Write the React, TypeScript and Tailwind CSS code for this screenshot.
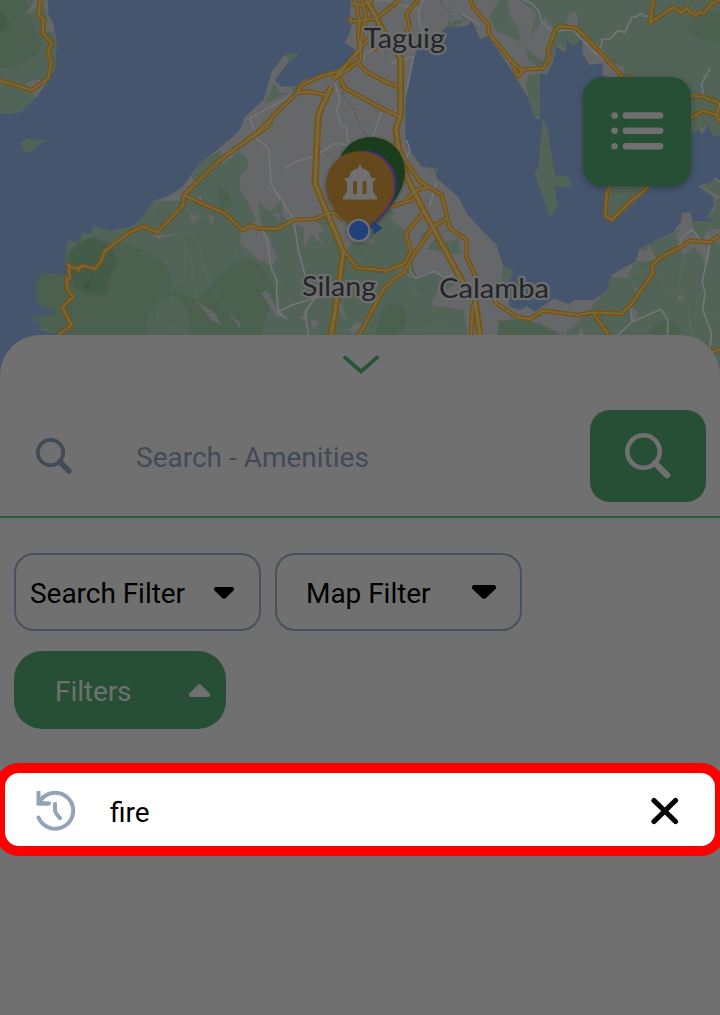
import React from "react";

type Layer = { x: number; y: number; d: string };

const greens: Layer[] = [
  { x: 0, y: 0, d: "M0 0H105L72 48L82 50L112 22L116 0H128L145 48L135 92L160 95L170 130L165 210L140 245L120 265L75 255L110 290L60 338L0 342Z" },
  { x: 0, y: 0, d: "M64 425L88 413L107 423L147 417L107 440L101 451L73 459Z" },
  { x: 0, y: 0, d: "M720 450L670 495L660 450L600 490L575 530L588 555L560 590L540 640L720 700Z" },
  { x: 0, y: 570, d: "M560 30L550 32L460 32L420 90L400 108L330 122L282 108L270 135L250 125L235 158L205 150L197 190L200 255L125 250L108 288L130 295L128 310L108 315L113 342L135 340L145 360L165 352L175 370L90 385L135 400L112 420L170 430V620H600V-10L560 0Z" },
  { x: 720, y: 0, d: "M130 165L178 158L152 182ZM75 312L103 250L120 278L150 280L100 300ZM155 262L185 245L182 278L158 275ZM570 510L597 504L590 518ZM615 82L640 62L680 58L645 82ZM0 460L15 465L26 500L0 530Z" },
  { x: 540, y: 540, d: "M0 50L30 20L90 -40L180 -60V30L205 70L230 120L185 150L180 190L230 235L275 255L292 235L270 175L245 145L235 65L270 95L305 60L308 110L330 125L372 145L372 208L395 160L430 200L412 160L436 158L400 108L450 105L490 200L520 235L510 300L540 300V480H0Z" },
  { x: 1050, y: 450, d: "M40 230L110 165L135 190L120 205L162 240L180 300L165 345L110 360L0 345L-20 310L10 275L75 280ZM0 350L110 368L160 355L130 380L100 410L25 555H-90L-60 420L0 350ZM25 555L100 425L165 370L180 385L240 365L330 390L290 420L270 410L240 465L340 480L352 555ZM165 345L205 290L210 272L185 330L200 385L175 370ZM228 298L262 260L278 278L325 268L332 312ZM210 260L240 235L225 275ZM0 310L-80 250L-45 340Z" },
  { x: 1440, y: 0, d: "M60 0L28 50L50 95L100 115L125 125L105 65L90 50L80 0ZM120 0L170 40L150 110L195 50L220 85L205 130L190 185L135 145L145 180L190 210L240 130L260 158L257 115L278 137L330 105L258 70L270 40L290 35L295 85L370 150L380 188L430 200L430 232H590L635 300V400L660 390L682 375L700 408L720 405V0Z" },
  { x: 1440, y: 0, d: "M178 220L145 225L138 250L145 295L165 355L180 345ZM188 348L205 400L225 525L265 530L275 560L225 558L230 600L233 620L210 653L163 520L175 505ZM400 550L380 580L378 650L395 665L440 630L525 550Z" },
  { x: 1440, y: 570, d: "M720 25L695 30L708 55L683 80L703 95H650L620 105L580 130L480 175L530 205L500 215L465 215L440 265L395 260L378 305L345 335L325 370L250 435L180 400L50 390L55 440H640Q700 470 720 560V160L690 155L680 230L650 165L610 195L590 160L640 130L665 155L680 125L720 115ZM85 280L100 240L70 230L65 270ZM700 -30L720 -20V20L690 0L665 -10Z" },
];
const woods: Layer[] = [
  { x: 0, y: 0, d: "M80 0Q92 80 125 130L115 160L50 200L0 205V0Z" },
  { x: 0, y: 570, d: "M195 190L240 155L280 140L320 155Q420 160 490 220Q520 250 515 300L590 330L680 235Q720 200 770 215Q800 235 830 320L800 370L780 440V600H170V430L90 385L175 370L113 342L108 288L125 250L200 255Z" },
  { x: 0, y: 0, d: "M650 550L685 580L700 620L660 630Z" },
  { x: 720, y: 570, d: "M415 385Q440 320 490 350Q520 410 460 440H410Z" },
  { x: 1440, y: 570, d: "M60 400Q110 370 200 415L250 440H50ZM500 430Q560 360 605 420L600 440Z" },
  { x: 1440, y: 0, d: "M630 70L670 30L720 40V125L660 115L625 95Z" },
];
const forests: Layer[] = [
  { x: 0, y: 0, d: "M0 32Q35 60 25 85L0 97Z" },
  { x: 0, y: 570, d: "M205 190L240 158L280 140L310 160Q350 180 350 220L320 275Q340 300 310 315Q250 315 220 290L200 260Z" },
];
const grays: Layer[] = [
  { x: 0, y: 0, d: "M72 48L110 0V20ZM128 0H143L145 45L158 70L160 95L138 90L145 65ZM75 255L95 240H120L130 260L110 293Z" },
  { x: 0, y: 570, d: "M567 68L600 83L577 100ZM622 72L640 78V105ZM455 135L545 130L475 147ZM592 335L645 370L665 405L635 392ZM680 360L720 400V415ZM588 25L605 15L607 35Z" },
  { x: 720, y: 570, d: "M65 310L80 300L130 385L110 380ZM180 385L205 355L195 395ZM210 390L238 392L223 420ZM295 340L302 335L322 395L300 370ZM325 420L350 395L370 400L340 435Z" },
  { x: 540, y: 540, d: "M278 100H302L300 125Z" },
  { x: 1440, y: 570, d: "M505 162L528 200L495 205ZM625 80L645 120L600 160L585 140ZM605 310L615 330L588 330ZM452 285L480 300L465 305ZM190 365L260 380L235 415L200 400ZM250 410L260 405L258 435H240ZM302 405L313 435H296ZM452 355L472 360V395H455ZM642 160L690 155V190L680 235L670 190L650 187ZM15 350L45 370L55 405L45 440H10Z" },
];
const minorRoads: Layer[] = [
  { x: 720, y: 0, d: "M155 285L30 355L55 420L87 445L93 550L120 600M285 250L300 300L290 330L303 375L320 380L323 430M425 335L398 408M323 435L285 430L225 468L165 485L133 507M330 15L370 10L440 0L500 20L535 25M550 0L535 35L540 75L550 100M452 190L520 170L500 270M345 185L370 180L375 160L430 140M635 0L665 40L720 75M500 420L510 450L495 480" },
  { x: 720, y: 570, d: "M105 0L160 85L175 180L195 255M60 115L80 140L92 230L110 270V310L115 365L140 387M115 365L155 345L245 318M245 295L195 365L205 435M588 -20L568 50M510 220V245L527 265L585 243L610 262L650 250" },
  { x: 1440, y: 570, d: "M690 160L667 275L675 310L668 360L695 430L690 470M413 435L457 395L543 358L563 390V435M457 395L450 350M600 165L605 145L637 118L665 155" },
  { x: 1440, y: 0, d: "M130 0L155 10L178 35L182 60L205 85L225 92L280 90L345 160L365 135V118L390 117L413 92L435 97L455 53L470 50L483 40L493 50L515 45M690 205L665 250L670 290M345 160L405 198" },
];
const fineRoads: Layer[] = [
  { x: 0, y: 570, d: "M470 40L450 80L425 95M540 135L555 170L553 265L512 287L518 345L470 372L475 395L560 430M555 130H575L605 180V210L635 285L680 370M545 135L580 235L575 260L588 285V335L700 430M560 60L620 85L700 170L720 210" },
  { x: 720, y: 570, d: "M385 175L350 230M95 220L155 345M0 210L50 250L100 320M500 270L545 330M515 430L565 412L620 400L690 350M535 265L510 290L540 325" },
  { x: 1440, y: 570, d: "M525 235L445 258L475 290M525 240L560 305L610 315M600 160L610 220L595 280L625 350L635 440M670 360L720 385M160 400L215 390" },
  { x: 1440, y: 0, d: "M28 60L55 85L150 75M130 120L190 140" },
];
const roads: Layer[] = [
  { x: 0, y: 0, d: "M120 0L117 50L130 55L128 100L155 127L143 158L154 185L145 236L95 270L0 242" },
  { x: 0, y: 0, d: "M810 360L780 390L715 440L657 482L552 585L550 615L471 698L431 680L388 698L314 753L303 785L283 807L255 797L240 800L235 812L230 803H215L205 793L210 835H200L202 870L220 890L187 922L215 974L175 1005" },
  { x: 540, y: 540, d: "M12 45L80 77L135 100L188 150L215 137L235 145L290 147L345 120L405 117L440 100L465 98L490 122" },
  { x: 720, y: 0, d: "M345 0L357 55L355 110L360 150L300 213L245 228L185 255L172 278L98 348L85 378L0 438M366 0L378 55L364 110L362 180L285 235M330 65L410 55L478 0M333 65L330 50M390 110L280 240M310 750L350 803L440 812L495 790L512 755L498 700L550 638M172 278L210 275L258 285M300 235L315 265L425 325L475 348M350 185L380 215L440 247L475 260M400 150L430 130L490 115L508 75L500 40L535 0M400 0L360 15L333 10M455 435L475 440M495 600L530 570L572 560M455 620L520 598" },
  { x: 720, y: 0, d: "M475 440L495 480L540 545L605 585L630 685L680 720V770L715 850" },
  { x: 720, y: 570, d: "M355 440L430 298L465 265L495 245L520 195L580 110L620 85M693 440L698 350L710 330" },
  { x: 1440, y: 0, d: "M-30 -5L-18 25L25 75L27 100L95 185L125 210L155 207L190 205L212 170L203 155L225 90L240 78L290 85L350 145L400 200L440 245M520 0L510 68L580 22L605 38L622 22L630 38L648 45L660 35L670 40L695 10L720 0M100 195L112 230L130 210M390 560L380 580L376 648L395 660L440 615L505 560M632 288L670 290L720 310L710 345L668 332L632 355M710 345L725 375M445 232H460" },
  { x: 1440, y: 570, d: "M-15 275L0 290L25 305L50 340L108 380L150 387L190 362L293 375L340 367L423 371L450 347L520 248L515 227L540 203L600 172L630 152L690 157L720 135M340 370L390 440M690 487L720 478M0 290L20 300L-15 330" },
];
const highways: Layer[] = [
  { x: 720, y: 0, d: "M380 0L430 95L470 150L482 180V345L468 385L475 440L500 530L550 630L670 850L705 900L720 1010" },
  { x: 720, y: 0, d: "M273 260L235 345L225 550L260 635L310 755L292 890L272 1010" },
];

function Paths({ layers, fill = "none", stroke, width = 0, dash }: {
  layers: Layer[]; fill?: string; stroke?: string; width?: number; dash?: string;
}) {
  return (
    <g fill={fill} stroke={stroke} strokeWidth={width} strokeDasharray={dash} strokeLinejoin="round">
      {layers.map((l, i) => <path key={i} d={l.d} transform={`translate(${l.x} ${l.y})`} />)}
    </g>
  );
}

function MapLabel({ x, y, w, children }: { x: number; y: number; w: number; children: string }) {
  return (
    <text x={x} y={y} textLength={w} lengthAdjust="spacingAndGlyphs" fontFamily="Lato, sans-serif" fontSize="27"
      fill="#242526" stroke="#6c6d6e" strokeWidth="4.500" strokeLinejoin="round" paintOrder="stroke">{children}</text>
  );
}

function MapView() {
  return (
    <svg className="block h-[390px] w-[720px]" viewBox="0 0 720 390">
      <defs>
        <filter id="pinShadow" x="-30%" y="-30%" width="160%" height="160%">
          <feDropShadow dx="0" dy="1" stdDeviation="2" floodOpacity=".3" />
        </filter>
      </defs>
      <rect width="720" height="390" fill="#45556d" />
      <g transform="scale(.333333)">
        <path fill="#666769" d="M0 0H143L145 45L160 70L170 130L165 210L130 265L60 338L0 342ZM1053 0L1050 40L1055 80L1035 130L1060 145L1070 160L1020 205L905 243L888 262L840 258L825 240L870 180L895 162L850 168L815 215L790 300L735 350L720 388L700 410L600 490L545 563L500 590L460 602L420 660L200 825L170 1170H2160V0Z" />
        <path fill="#45556d" d="M1250 150L1280 120L1320 100L1340 82L1400 78L1415 62L1440 118L1465 108L1540 220L1585 295L1605 355L1618 358L1620 220L1640 222L1657 190L1670 142L1700 158L1697 115L1718 137L1748 115V160L1768 195L1808 190V225L1900 260L2075 400L2100 390L2105 405L2122 375L2140 408L2160 405V540L2140 530L2150 560L2120 550L2095 558L2140 590L2148 610L2123 650L2143 665H2077L2072 638H2045L2043 665L2020 695L1920 745L1905 785L1835 825L1818 875L1780 900H1725L1705 912L1662 895L1605 935L1580 918L1560 930L1528 920L1525 850L1540 810L1510 800L1490 735L1440 685L1400 640L1375 590L1310 535L1305 505L1265 500L1220 440L1215 400L1217 300L1240 190Z" />
        <Paths layers={greens} fill="#526357" />
        <Paths layers={woods} fill="#4c6050" />
        <Paths layers={forests} fill="#435b49" />
        <Paths layers={grays} fill="#666769" />
        <path fill="#506354" d="M440 960Q460 900 510 887Q555 885 570 960V1010H440Z" />
        <path fill="#3d5343" d="M285 820L250 862L290 875L265 860Z" />
        <Paths layers={fineRoads} stroke="#596a5e" width={2} />
        <Paths layers={minorRoads} stroke="#747577" width={5} />
        <Paths layers={[{ x: 720, y: 0, d: "M300 255L315 295L340 325L360 380L385 415M600 0L610 20L633 40L625 80M635 0L680 65" }]} stroke="#505255" width={3} dash="12 7" />
        <Paths layers={roads} stroke="#795306" width={14} />
        <Paths layers={highways} stroke="#795306" width={20} />
        <Paths layers={roads} stroke="#776747" width={6} />
        <Paths layers={highways} stroke="#776844" width={10} />
      </g>

      <MapLabel x={364} y={48} w={81}>Taguig</MapLabel>
      <MapLabel x={302} y={295.5} w={74}>Silang</MapLabel>
      <MapLabel x={439} y={297.5} w={110}>Calamba</MapLabel>

      <g filter="url(#pinShadow)">
        <path fill="#1e3c1c" d="M371 137A34 34 0 0 1 405 171C405 190 392 207 368 231C349 208 337 190 337 171A34 34 0 0 1 371 137Z" />
        <path fill="#34306d" d="M364 150A34 34 0 0 1 397 184C397 203 383 218 365 232L340 180Z" />
        <path fill="#65334d" d="M361 151A34 34 0 0 1 395 185C395 204 382 218 362 232Z" />
        <path fill="#65491e" d="M360 151A34 34 0 0 1 394 185C394 207 376 217 360 236C344 217 326 207 326 185A34 34 0 0 1 360 151Z" />
      </g>
      <g fill="#707070">
        <path d="M358.500 168V166Q360 164 361.500 166V168Q370 170 371 178H375V181H373V193H375V196H377V199.500H343V196H345V193H347V181H345V178H349Q350 170 358.500 168Z" />
        <path fill="#65491e" d="M353 181H357V194H353ZM362.500 181H366.500V194H362.500Z" />
      </g>
      <path fill="#203e79" d="M372 221L382.500 228L373.500 234.500Z" />
      <circle cx="358.700" cy="230.500" r="10.700" fill="#213f79" stroke="#707070" strokeWidth="2" filter="url(#pinShadow)" />
    </svg>
  );
}

function SearchIcon({ className, thin }: { className: string; thin?: boolean }) {
  return (
    <svg viewBox="0 0 36 36" className={className} fill="none" stroke="currentColor" strokeLinecap="round">
      <circle cx="14.500" cy="14.500" r="12.700" strokeWidth={thin ? 3.6 : 3.8} />
      <path d="M25 25L33 33" strokeWidth={thin ? 4.9 : 5.4} />
      <path d="M23 23L25 25" strokeWidth="3.600" />
    </svg>
  );
}

function Caret({ className }: { className: string }) {
  return (
    <svg viewBox="0 0 24 14" preserveAspectRatio="none" className={className} fill="currentColor">
      <path d="M1.500 0H22.500Q24 .5 24 2V3.500L14.500 12.500Q12 15 9.500 12.500L0 3.500V2Q0 .5 1.500 0Z" />
    </svg>
  );
}

export default function App() {
  return (
    <div className="h-[1015px] w-[720px] overflow-hidden bg-[#707070] font-['Roboto',sans-serif] text-[28px] leading-8 text-black">
      <div className="relative h-[335px]">
        <MapView />
        <button className="absolute top-[77px] left-[583px] flex h-[109px] w-[108px] items-center justify-center rounded-[20px] bg-[#274f36] shadow-[0_2px_7px_rgba(0,0,0,0.3)]">
          <svg viewBox="0 0 54 40" className="-mt-px h-10 w-[54px]" fill="none" stroke="#707070" strokeLinecap="round">
            <path strokeWidth="6.600" d="M16 4.500H50M16 19.800H50M16 35.200H50M4.500 4.500H4.600M4.500 19.800H4.600M4.500 35.200H4.600" />
          </svg>
        </button>
      </div>

      <main className="relative h-[680px] rounded-t-[40px] bg-[#707070]">
        <div className="flex h-[75px] justify-center pt-5 pl-px">
          <svg viewBox="0 0 36 20" className="h-5 w-9" fill="none" stroke="#285338" strokeWidth="3.700" strokeLinecap="round">
            <path d="M2 2.500L18 16.500L34 2.500" />
          </svg>
        </div>
        <div className="flex h-[108px] items-start border-b-2 border-[#2d5b3c] pr-3.5 pl-9">
          <SearchIcon className="mt-7 h-9 w-9 text-[#424a57]" />
          <span className="mt-8 ml-16 flex-1 text-[#424a57]">Search - Amenities</span>
          <button className="flex h-[92px] w-[116px] items-center justify-center rounded-[20px] bg-[#274f36] text-[#707070]">
            <SearchIcon className="h-[46px] w-[46px]" thin />
          </button>
        </div>

        <div className="flex gap-3.5 px-3.5 pt-[35px]">
          <button className="flex h-[78px] w-[247px] items-center rounded-[20px] border-2 border-[#4a505c] pt-0.5 pr-[25px] pl-3.5">
            <span className="mt-0.5 tracking-[-0.04px]">Search Filter</span>
            <Caret className="ml-auto h-3 w-5" />
          </button>
          <button className="flex h-[78px] w-[247px] items-center rounded-[20px] border-2 border-[#4a505c] pr-6 pl-[29px]">
            <span className="mt-1 tracking-[-0.04px]">Map Filter</span>
            <Caret className="ml-auto h-3.5 w-6" />
          </button>
        </div>
        <button className="mt-5 ml-3.5 flex h-[78px] w-[212px] items-center rounded-[28px] bg-[#274f36] pr-4 pl-[41px] text-[#707070]">
          <span className="mt-1 tracking-[-0.08px]">Filters</span>
          <Caret className="ml-auto h-[13px] w-[21px] rotate-180" />
        </button>

        <div className="-mx-[5px] mt-[34px] flex h-[93px] items-center rounded-[24px] border-[10px] border-[#ff0000] bg-white pr-9 pl-[30px]">
          <svg viewBox="0 0 40 41" className="mt-0.5 ml-px h-[41px] w-10 shrink-0 text-[#94a3b8]" fill="none" stroke="currentColor" strokeWidth="4" strokeLinecap="round">
            <path d="M2.500 27.500A18 18 0 1 0 5.500 9" />
            <path d="M2.500 1V13.500H13" strokeLinecap="butt" />
            <path d="M3 13L7 7M13 13.500H3M19 14V20Q19 23 24 28" />
          </svg>
          <span className="ml-[34px] flex-1 pt-[6px]">fire</span>
          <svg viewBox="0 0 28 28" className="mt-0.5 h-7 w-7" fill="none" stroke="black" strokeWidth="5.200" strokeLinecap="round">
            <path d="M3 3.500L24.500 24.500M24.500 3.500L3 24.500" />
          </svg>
        </div>
      </main>
    </div>
  );
}
